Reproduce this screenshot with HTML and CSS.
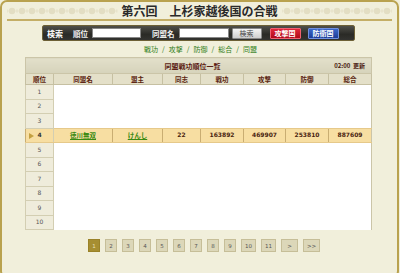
FILE: index.html
```html
<!DOCTYPE html>
<html lang="ja">
<head>
    <meta charset="UTF-8">
    <meta name="viewport" content="width=device-width, initial-scale=1.0">
    <title>第六回 上杉家越後国の合戦</title>
    <link rel="stylesheet" href="styles.css">
</head>
<body>

    <div class="frame">
        <svg class="defs" width="0" height="0">
            <defs>
                <pattern id="deco" width="10" height="10" patternUnits="userSpaceOnUse">
                    <circle cx="5" cy="5" r="3.2" fill="#e3dec3"/>
                    <path d="M0 3 L2 5 L0 7 Z M10 3 L8 5 L10 7 Z" fill="#e8e4cc"/>
                </pattern>
            </defs>
        </svg>

        <header class="title-band">
            <svg class="deco"><rect width="100%" height="100%" fill="url(#deco)"/></svg>
            <h1>第六回　上杉家越後国の合戦</h1>
            <svg class="deco"><rect width="100%" height="100%" fill="url(#deco)"/></svg>
        </header>

        <form class="search-bar">
            <span class="search-label">検索</span>
            <label class="field-label">順位</label>
            <input type="text" class="field rank-field">
            <label class="field-label name-label">同盟名</label>
            <input type="text" class="field name-field">
            <button type="button" class="btn btn-search">検索</button>
            <button type="button" class="btn btn-attack">攻撃国</button>
            <button type="button" class="btn btn-defend">防衛国</button>
        </form>

        <nav class="tabs">
            <a href="#">戦功</a><span class="sep">/</span><a href="#">攻撃</a><span class="sep">/</span><a href="#">防御</a><span class="sep">/</span><a href="#">総合</a><span class="sep">/</span><a href="#">同盟</a>
        </nav>

        <table class="ranking">
            <colgroup>
                <col style="width:28px"><col style="width:59px"><col style="width:50px"><col style="width:38px">
                <col style="width:43px"><col style="width:42px"><col style="width:43px"><col style="width:43px">
            </colgroup>
            <thead>
                <tr class="caption-row">
                    <th colspan="8">
                        <div class="caption">
                            <span></span>
                            <span class="caption-title">同盟戦功順位一覧</span>
                            <span class="updated">02:00&nbsp;&nbsp;更新</span>
                        </div>
                    </th>
                </tr>
                <tr class="head-row">
                    <th>順位</th><th>同盟名</th><th>盟主</th><th>同志</th>
                    <th>戦功</th><th>攻撃</th><th>防御</th><th>総合</th>
                </tr>
            </thead>
            <tbody>
                <tr><td class="rank">1</td><td colspan="7"></td></tr>
                <tr><td class="rank">2</td><td colspan="7"></td></tr>
                <tr><td class="rank">3</td><td colspan="7"></td></tr>
                <tr class="mine">
                    <td class="rank"><span class="marker"></span>4</td>
                    <td><a href="#">徳川無双</a></td>
                    <td><a href="#">けんし</a></td>
                    <td class="num">22</td>
                    <td class="num">163892</td>
                    <td class="num">469907</td>
                    <td class="num">253810</td>
                    <td class="num">887609</td>
                </tr>
                <tr><td class="rank">5</td><td colspan="7"></td></tr>
                <tr><td class="rank">6</td><td colspan="7"></td></tr>
                <tr><td class="rank">7</td><td colspan="7"></td></tr>
                <tr><td class="rank">8</td><td colspan="7"></td></tr>
                <tr><td class="rank">9</td><td colspan="7"></td></tr>
                <tr><td class="rank">10</td><td colspan="7"></td></tr>
            </tbody>
        </table>

        <div class="pager">
            <a href="#" class="page current">1</a>
            <a href="#" class="page">2</a>
            <a href="#" class="page">3</a>
            <a href="#" class="page">4</a>
            <a href="#" class="page">5</a>
            <a href="#" class="page">6</a>
            <a href="#" class="page">7</a>
            <a href="#" class="page">8</a>
            <a href="#" class="page">9</a>
            <a href="#" class="page wide">10</a>
            <a href="#" class="page wide">11</a>
            <a href="#" class="page arrow">&gt;</a>
            <a href="#" class="page arrow">&gt;&gt;</a>
        </div>
    </div>

</body>
</html>
```

FILE: styles.css
```css
/* 全体 */
body {
    margin: 0;
    width: 400px;
    height: 273px;
    overflow: hidden;
    background: #f1efdb;
    font-family: "Noto Sans CJK JP", "DejaVu Sans", sans-serif;
    color: #333;
}

.frame {
    box-sizing: border-box;
    width: 399px;
    height: 278px;
    border: 2px solid #b9a24f;
    border-radius: 7px;
    background: #f1efdb;
}

.defs {
    position: absolute;
}

/* タイトル */
.title-band {
    display: flex;
    align-items: center;
    height: 17px;
    margin: 0 5px;
    border-bottom: 2px solid #c4ae66;
}
.deco {
    flex: 1;
    height: 10px;
}
.title-band h1 {
    margin: 0 4px;
    font-size: 12px;
    line-height: 17px;
    font-weight: bold;
    color: #2a2a2a;
    white-space: nowrap;
}

/* 検索バー */
.search-bar {
    display: flex;
    align-items: center;
    box-sizing: border-box;
    width: 313px;
    height: 16px;
    margin: 4px 0 0 40px;
    padding-left: 4px;
    background: linear-gradient(#50504a, #2a2a26 60%, #333330);
    border: 1px solid #6d6036;
    border-radius: 2px;
}
.search-label {
    font-size: 8px;
    font-weight: bold;
    color: #fff;
    margin-right: 10px;
}
.field-label {
    font-size: 7.5px;
    font-weight: bold;
    color: #f2f2f2;
    margin-right: 4px;
}
.name-label {
    margin-left: 11px;
}
.field {
    box-sizing: border-box;
    height: 10px;
    padding: 0;
    border: 1px solid #888;
    background: #fff;
}
.rank-field { width: 49px; }
.name-field { width: 50px; }

.btn {
    box-sizing: border-box;
    height: 11px;
    padding: 0;
    font-family: inherit;
    font-size: 7px;
    line-height: 9px;
    border-radius: 1px;
}
.btn-search {
    width: 30px;
    margin-left: 3px;
    background: linear-gradient(#f4f4f4, #cfcfcf);
    border: 1px solid #8a8a8a;
    color: #444;
}
.btn-attack {
    width: 31px;
    margin-left: 8px;
    background: linear-gradient(#e0283a, #b00818);
    border: 1px solid #f06070;
    color: #fff;
    font-weight: bold;
}
.btn-defend {
    width: 31px;
    margin-left: 7px;
    background: linear-gradient(#3c68c8, #1c3c98);
    border: 1px solid #7090e0;
    color: #fff;
    font-weight: bold;
}

/* タブ */
.tabs {
    margin-top: 3px;
    text-align: center;
    font-size: 7px;
    line-height: 10px;
    padding-left: 2px;
}
.tabs a {
    color: #2f7d18;
    text-decoration: none;
}
.tabs .sep {
    margin: 0 4px;
    color: #2f7d18;
}

/* 順位表 */
.ranking {
    margin: 3px 0 0 23px;
    width: 346px;
    border-collapse: collapse;
    table-layout: fixed;
    background: #fff;
    border-right: 1px solid #cbc5a8;
    font-size: 6px;
    line-height: 8px;
}
.caption-row th {
    height: 15px;
    padding: 0;
    background: linear-gradient(#e2dfca, #d6d3bb);
    border: 1px solid #cbc5a8;
}
.caption {
    display: grid;
    grid-template-columns: 1fr auto 1fr;
    align-items: center;
    padding-right: 12px;
}
.caption-title {
    font-size: 7px;
    font-weight: bold;
    color: #5a1a10;
}
.updated {
    text-align: right;
    font-size: 6px;
    font-weight: bold;
    color: #4a1a10;
    margin-right: -6px;
}
.head-row th {
    height: 10px;
    padding: 0;
    font-size: 6.5px;
    font-weight: bold;
    color: #5a1e0e;
    background: #e4e0c9;
    border: 1px solid #c6c0a2;
}
.ranking td {
    height: 13.5px;
    padding: 0;
    text-align: center;
}
.ranking td.rank {
    position: relative;
    background: #efecdb;
    border: 1px solid #d3ceb2;
    font-family: "DejaVu Sans", sans-serif;
    font-size: 6px;
    color: #555;
}

/* 自同盟の行 */
.ranking tr.mine td {
    background: #f7dea2;
    border-top: 1px solid #e6c98a;
    border-bottom: 1px solid #e6c98a;
    border-left: 1px solid #c9ad72;
}
.ranking tr.mine td.rank {
    font-weight: bold;
    color: #333;
}
.marker {
    position: absolute;
    left: 3px;
    top: 4px;
    width: 0;
    height: 0;
    border-top: 3px solid transparent;
    border-bottom: 3px solid transparent;
    border-left: 5px solid #c4a040;
}
.mine a {
    font-size: 6.5px;
    font-weight: bold;
    color: #3a8a12;
}
.mine .num {
    font-family: "DejaVu Sans", sans-serif;
    font-size: 6px;
    font-weight: bold;
    color: #4a2410;
}

/* ページ送り */
.pager {
    display: flex;
    gap: 5px;
    margin: 9px 0 0 86px;
}
.page {
    box-sizing: border-box;
    width: 12px;
    height: 13px;
    display: flex;
    align-items: center;
    justify-content: center;
    font-family: "DejaVu Sans", sans-serif;
    font-size: 5.5px;
    color: #555;
    text-decoration: none;
    background: #dcd7b9;
    border: 1px solid #c6be98;
}
.page.wide { width: 15px; }
.page.arrow { width: 17px; }
.page.current {
    background: #a68e32;
    border-color: #9a8228;
    color: #e8e0b8;
}
```
